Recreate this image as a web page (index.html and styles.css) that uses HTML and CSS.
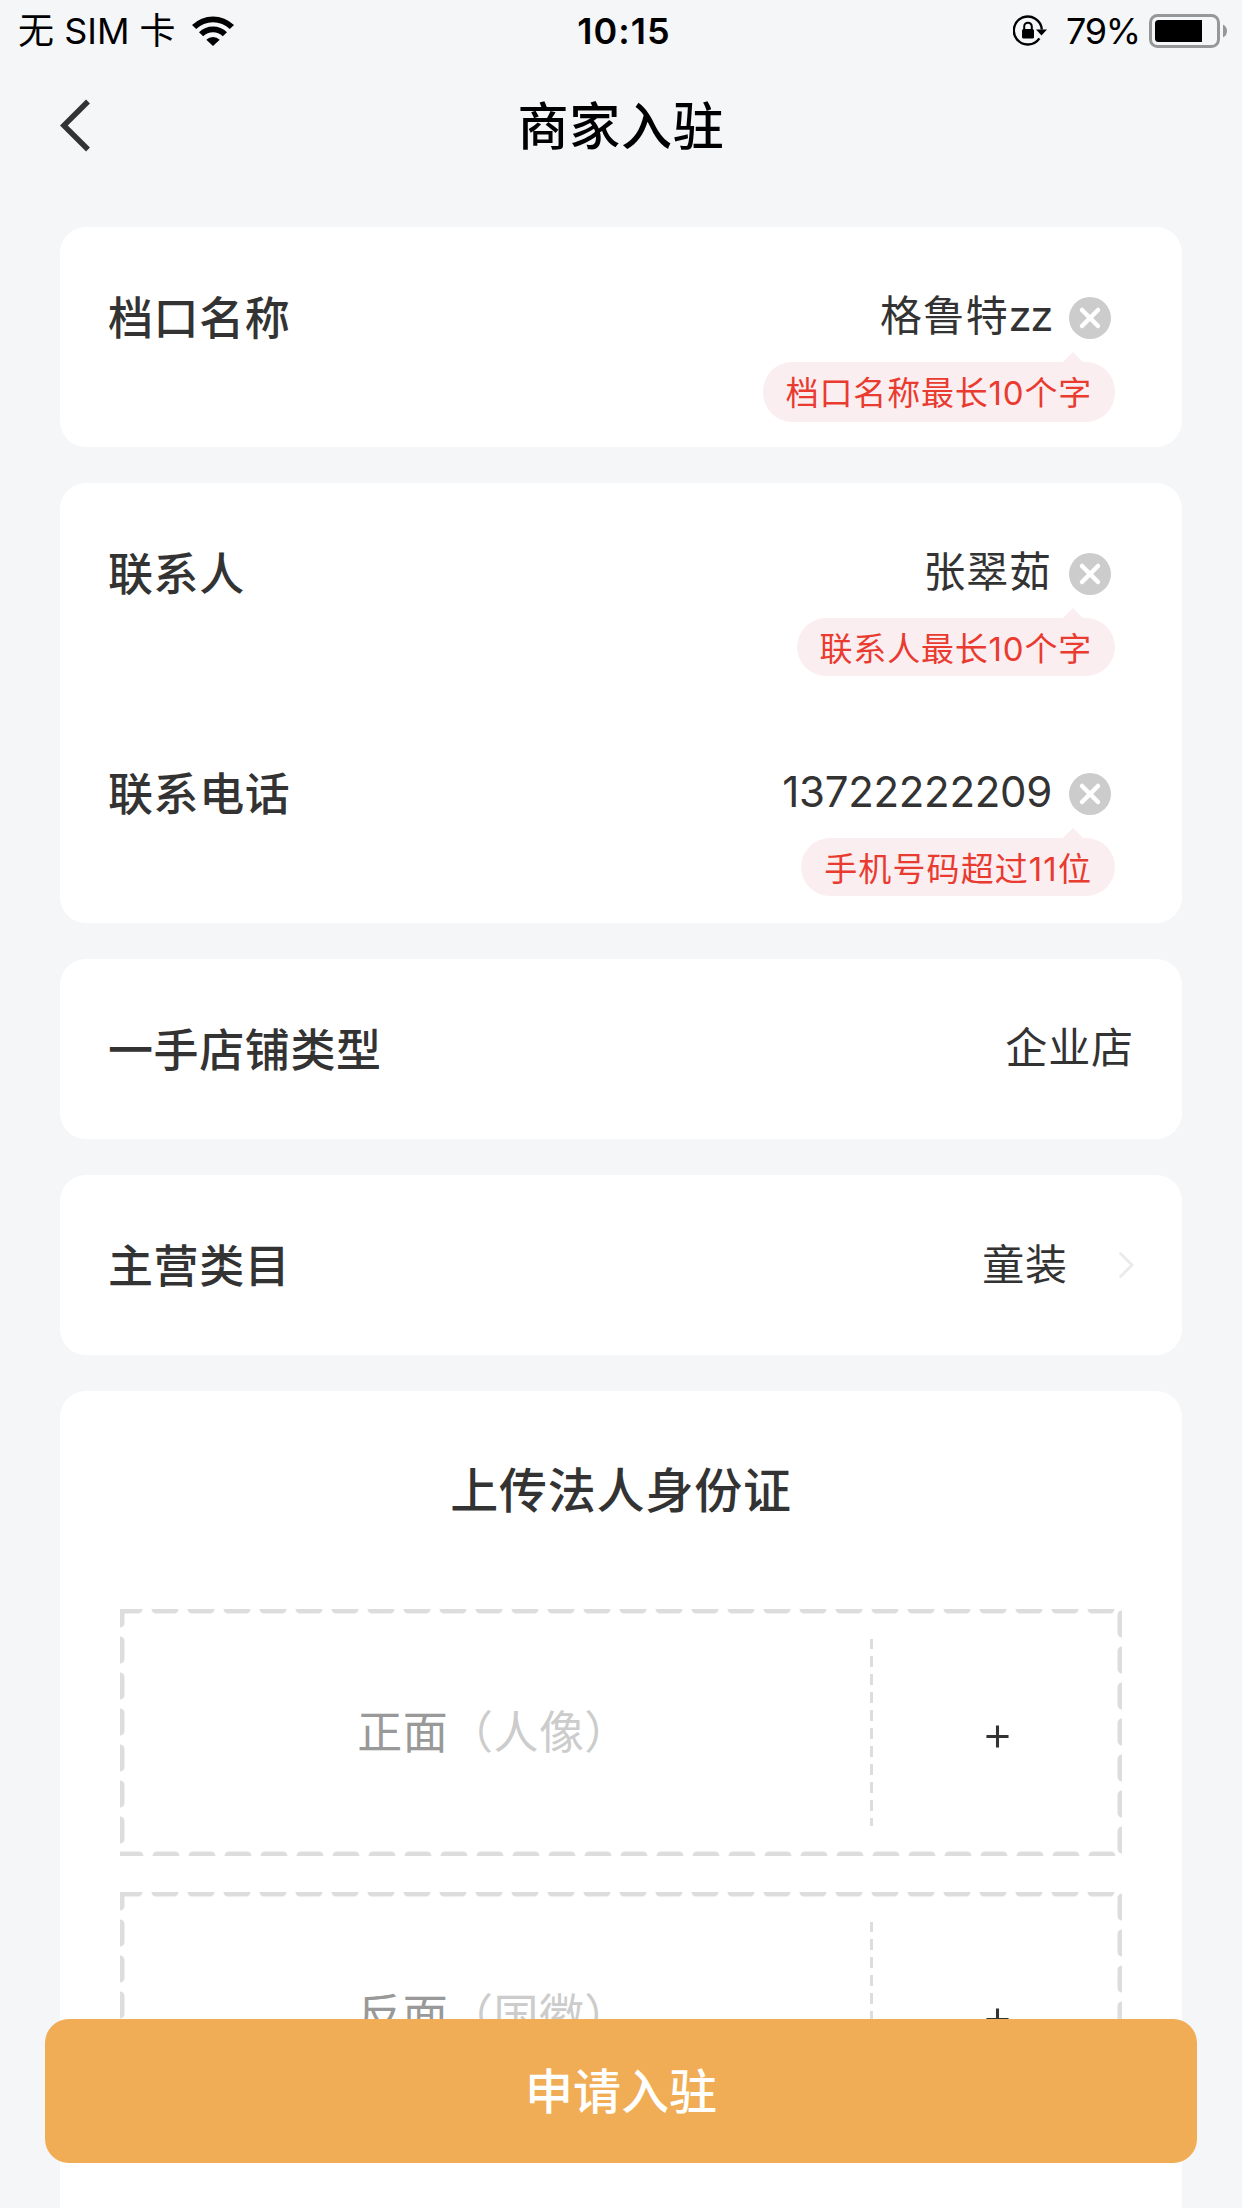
FILE: index.html
```html
<!DOCTYPE html>
<html lang="zh-CN">
<head>
  <meta charset="UTF-8">
  <title>商家入驻</title>
  <link rel="stylesheet" href="styles.css">
</head>
<body>
  <div class="status-bar">
    <div class="status-left">
      <span class="carrier">无 SIM 卡</span>
      <svg class="wifi" width="42" height="30" viewBox="0 0 42 30">
        <path d="M0 9A30 30 0 0 1 42 9L37.800 13A24 24 0 0 0 4.200 13Z"/>
        <path d="M7 16.200A20 20 0 0 1 35 16.200L30.800 20.300A14 14 0 0 0 11.200 20.300Z"/>
        <path d="M14.300 23.800A9.500 9.500 0 0 1 27.700 23.800L21 30Z"/>
      </svg>
    </div>
    <span class="time">10:15</span>
    <div class="status-right">
      <svg class="lock" width="34" height="31" viewBox="0 0 34 31">
        <path d="M26.400 23.400A14 14 0 1 1 28.800 14.500" fill="none" stroke="#000" stroke-width="2.400"/>
        <path d="M23 14.500H34L28.500 20.500Z"/>
        <rect x="9" y="14" width="12" height="9.500" rx="1.500"/>
        <path d="M11.200 15V11.500A3.800 3.800 0 0 1 18.800 11.500V15" fill="none" stroke="#000" stroke-width="2"/>
      </svg>
      <span class="percent">79%</span>
      <svg class="battery" width="78" height="34" viewBox="0 0 78 34">
        <rect x="1.500" y="1.500" width="68" height="31" rx="7" fill="none" stroke="#969799" stroke-width="3"/>
        <path d="M53 6V28H9.500A3.500 3.500 0 0 1 6 24.500V9.500A3.500 3.500 0 0 1 9.500 6Z"/>
        <path d="M74 10.500Q78 12.500 78 17T74 23.500Z" fill="#969799"/>
      </svg>
    </div>
  </div>

  <div class="nav">
    <svg class="back" width="32" height="54" viewBox="0 0 32 54"><path d="M28 2.500L3.800 26.500L28 50.500" fill="none" stroke="#333" stroke-width="5.500"/></svg>
    <h1>商家入驻</h1>
  </div>

  <div class="form">
    <div class="card">
      <div class="row tall">
        <span class="label">档口名称</span>
        <div class="field">
          <div class="input">
            <span class="value">格鲁特<span class="latin">zz</span></span>
            <svg class="clear" width="42" height="42" viewBox="0 0 42 42"><circle cx="21" cy="21" r="21" fill="#ccc"/><path d="M13 13L29 29M29 13L13 29" stroke="#fff" stroke-width="4.500" stroke-linecap="round"/></svg>
          </div>
          <div class="tip first">档口名称最长10个字</div>
        </div>
      </div>
    </div>

    <div class="card">
      <div class="row tall">
        <span class="label">联系人</span>
        <div class="field">
          <div class="input">
            <span class="value">张翠茹</span>
            <svg class="clear" width="42" height="42" viewBox="0 0 42 42"><circle cx="21" cy="21" r="21" fill="#ccc"/><path d="M13 13L29 29M29 13L13 29" stroke="#fff" stroke-width="4.500" stroke-linecap="round"/></svg>
          </div>
          <div class="tip">联系人最长10个字</div>
        </div>
      </div>
      <div class="row tall">
        <span class="label">联系电话</span>
        <div class="field">
          <div class="input">
            <span class="value number">13722222209</span>
            <svg class="clear" width="42" height="42" viewBox="0 0 42 42"><circle cx="21" cy="21" r="21" fill="#ccc"/><path d="M13 13L29 29M29 13L13 29" stroke="#fff" stroke-width="4.500" stroke-linecap="round"/></svg>
          </div>
          <div class="tip phone">手机号码超过11位</div>
        </div>
      </div>
    </div>

    <div class="card">
      <div class="row">
        <span class="label">一手店铺类型</span>
        <span class="value">企业店</span>
      </div>
    </div>

    <div class="card">
      <div class="row">
        <span class="label">主营类目</span>
        <div class="select">
          <span class="value">童装</span>
          <svg class="arrow" width="15" height="26" viewBox="0 0 15 26"><path d="M1.500 1.500L13 13L1.500 24.500" fill="none" stroke="#eaeaea" stroke-width="2.700" stroke-linecap="round"/></svg>
        </div>
      </div>
    </div>

    <div class="card upload">
      <h2>上传法人身份证</h2>
      <div class="upload-box">
        <svg class="dashes" width="1002" height="247"><rect width="1002" height="247"/></svg>
        <div class="side">正面<span>（人像）</span></div>
        <svg class="divider" width="3" height="187"><path d="M1.500 0V187"/></svg>
        <div class="plus">+</div>
      </div>
      <div class="upload-box">
        <svg class="dashes" width="1002" height="247"><rect width="1002" height="247"/></svg>
        <div class="side">反面<span>（国徽）</span></div>
        <svg class="divider" width="3" height="187"><path d="M1.500 0V187"/></svg>
        <div class="plus">+</div>
      </div>
    </div>
  </div>

  <button class="submit">申请入驻</button>
</body>
</html>
```
FILE: styles.css
```css
* {
  box-sizing: border-box;
}
body {
  margin: 0;
  height: 2208px;
  overflow: hidden;
  background: #f5f6f8;
  color: #333;
  font-family: Inter, "Noto Sans CJK SC", sans-serif;
}
svg {
  display: block;
  flex-shrink: 0;
}
.status-bar {
  display: grid;
  grid-template-columns: 1fr auto 1fr;
  align-items: center;
  height: 60px;
  padding: 0 15px 0 18px;
  font-size: 36px;
  line-height: 60px;
  color: #000;
}
.status-bar span {
  padding-top: 1px;
}
.status-left,
.status-right {
  display: flex;
  align-items: center;
}
.status-right {
  justify-content: flex-end;
}
.wifi {
  margin-left: 16px;
}
.status-bar .time {
  padding-left: 3px;
  font-weight: 600;
  letter-spacing: 1px;
}
.percent {
  margin: 0 9px 0 19px;
  letter-spacing: -1.2px;
}
.nav {
  display: flex;
  align-items: center;
  height: 131px;
  padding: 0 60px;
}
.nav h1 {
  flex: 1;
  margin: 3px 32px 0 0;
  text-align: center;
  font-size: 51px;
  font-weight: 500;
  line-height: 60px;
  letter-spacing: 0.7px;
  color: #000;
}
.form {
  display: flex;
  flex-direction: column;
  gap: 36px;
  padding: 36px 60px 0;
}
.card {
  background: #fff;
  border-radius: 26px;
  padding: 0 48px;
}
.row {
  display: flex;
  justify-content: space-between;
  height: 180px;
}
.row.tall {
  height: 220px;
}
.label {
  font-size: 45px;
  font-weight: 500;
  line-height: 184px;
  letter-spacing: 0.6px;
}
.value {
  font-size: 42px;
  line-height: 178px;
  letter-spacing: 0.9px;
}
.value .latin {
  letter-spacing: -1.5px;
}
.value.number {
  letter-spacing: -0.3px;
}
.field {
  display: flex;
  flex-direction: column;
  align-items: flex-end;
  padding-right: 19px;
}
.input {
  display: flex;
  align-items: center;
  gap: 17px;
  height: 135px;
  padding: 43px 4px 0 0;
}
.input .value {
  line-height: 84px;
}
.input .clear {
  margin-top: 4px;
}
.tip {
  position: relative;
  height: 58px;
  padding: 0 23px;
  border-radius: 29px;
  background: #fbeef1;
  color: #e93b30;
  font-size: 33px;
  line-height: 63px;
  letter-spacing: 0.8px;
  font-kerning: none;
}
.tip.first {
  height: 60px;
}
.tip.phone {
  letter-spacing: 1.1px;
}
.tip::before {
  content: "";
  position: absolute;
  top: -10px;
  right: 31px;
  border: 11px solid transparent;
  border-top: 0;
  border-bottom: 11px solid #fbeef1;
}
.select {
  display: flex;
  align-items: center;
  gap: 51px;
}
.select .value {
  line-height: 176px;
}
.upload {
  height: 900px;
  padding: 0 60px;
}
.upload h2 {
  margin: 0;
  padding-top: 70px;
  height: 218px;
  text-align: center;
  font-size: 48px;
  font-weight: 500;
  line-height: 60px;
  letter-spacing: 0.8px;
}
.upload-box {
  position: relative;
  display: flex;
  align-items: center;
  height: 247px;
  margin-bottom: 36px;
}
.dashes {
  position: absolute;
  top: 0;
  left: 0;
}
.dashes rect {
  fill: none;
  stroke: #ddd;
  stroke-width: 9;
  stroke-linecap: round;
  stroke-dasharray: 18 18;
}
.divider path {
  stroke: #ddd;
  stroke-width: 3;
  stroke-dasharray: 11 7;
  stroke-dashoffset: 1;
}
.side {
  width: 750px;
  padding: 0 3px 6px 0;
  text-align: center;
  font-size: 45px;
  letter-spacing: 0.4px;
  color: #999;
}
.side span {
  color: #ccc;
}
.plus {
  flex: 1;
  text-align: center;
  font-size: 49px;
  font-weight: 300;
}
.submit {
  position: fixed;
  left: 45px;
  right: 45px;
  top: 2019px;
  height: 144px;
  padding: 0 0 6px;
  border: 0;
  border-radius: 24px;
  background: #f0ad55;
  color: #fff;
  font-family: inherit;
  font-size: 48px;
  font-weight: 500;
}
```
